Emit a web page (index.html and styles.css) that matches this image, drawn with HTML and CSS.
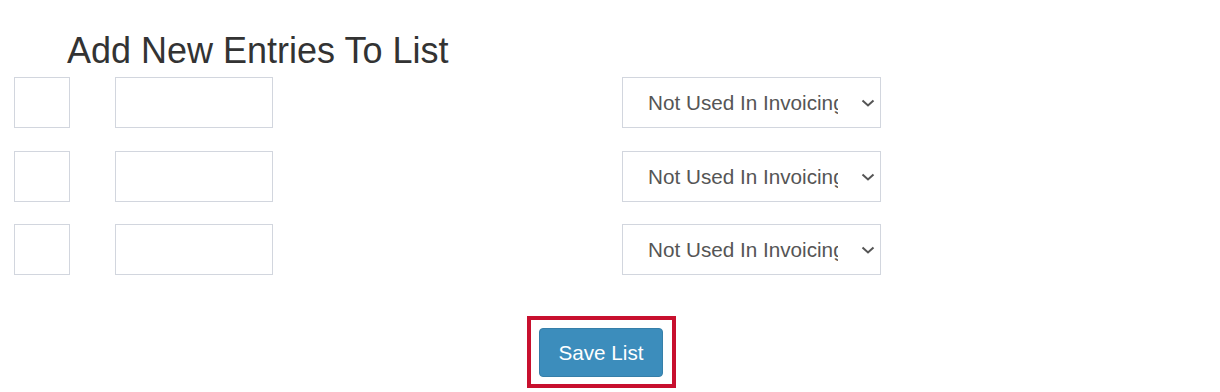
FILE: index.html
```html
<!DOCTYPE html>
<html lang="en">
<head>
<meta charset="utf-8">
<title>Add New Entries To List</title>
<link rel="stylesheet" href="styles.css">
</head>
<body>
<div class="page">
  <h2 class="title">Add New Entries To List</h2>
  <div class="rows">
    <div class="row">
      <input class="code" type="text">
      <input class="name" type="text">
      <div class="select-wrap">
        <select class="usage"><option>Not Used In Invoicing</option></select>
        <svg class="chev" width="14" height="8" viewBox="0 0 14 8"><path d="M1.5 1.5 L7 6.5 L12.5 1.5" fill="none" stroke="#555" stroke-width="2"/></svg>
      </div>
    </div>
    <div class="row">
      <input class="code" type="text">
      <input class="name" type="text">
      <div class="select-wrap">
        <select class="usage"><option>Not Used In Invoicing</option></select>
        <svg class="chev" width="14" height="8" viewBox="0 0 14 8"><path d="M1.5 1.5 L7 6.5 L12.5 1.5" fill="none" stroke="#555" stroke-width="2"/></svg>
      </div>
    </div>
    <div class="row">
      <input class="code" type="text">
      <input class="name" type="text">
      <div class="select-wrap">
        <select class="usage"><option>Not Used In Invoicing</option></select>
        <svg class="chev" width="14" height="8" viewBox="0 0 14 8"><path d="M1.5 1.5 L7 6.5 L12.5 1.5" fill="none" stroke="#555" stroke-width="2"/></svg>
      </div>
    </div>
  </div>
  <div class="actions">
    <div class="highlight">
      <button class="save" type="button">Save List</button>
    </div>
  </div>
</div>
</body>
</html>
```

FILE: styles.css
```css
html, body {
  margin: 0;
  padding: 0;
  background: #fff;
}
body {
  font-family: "Liberation Sans", Arial, sans-serif;
  color: #333;
  width: 1220px;
  height: 392px;
  overflow: hidden;
}
.page {
  padding: 31px 0 0 14px;
}
.title {
  margin: 0 0 7px 53px;
  font-size: 36px;
  font-weight: 400;
  line-height: 39px;
  color: #333;
}
.rows {
  display: flex;
  flex-direction: column;
  gap: 22.5px;
}
.row {
  display: flex;
  align-items: center;
  height: 51px;
}
input {
  box-sizing: border-box;
  height: 51px;
  border: 1px solid #d2d6de;
  border-radius: 0;
  margin: 0;
  padding: 6px 12px;
  font-family: inherit;
  font-size: 20.7px;
  background: #fff;
  outline: none;
}
.code {
  width: 56px;
}
.name {
  width: 158px;
  margin-left: 45px;
}
.select-wrap {
  position: relative;
  margin-left: 349px;
  width: 259px;
  height: 51px;
}
.usage {
  appearance: none;
  -webkit-appearance: none;
  box-sizing: border-box;
  width: 259px;
  height: 51px;
  margin: 0;
  border: 1px solid #d2d6de;
  border-radius: 0;
  background: #fff;
  padding: 0 42px 0 25px;
  font-family: "Liberation Sans", Arial, sans-serif;
  font-size: 20.7px;
  color: #555;
  outline: none;
}
.chev {
  position: absolute;
  left: 239px;
  top: 22px;
  pointer-events: none;
}
.actions {
  display: flex;
  margin-top: 41px;
  padding-left: 513px;
}
.highlight {
  border: 4px solid #c8102e;
  padding: 8px 9px 7px 8px;
}
.save {
  display: block;
  box-sizing: border-box;
  width: 124px;
  height: 49px;
  border: 1px solid #367fa9;
  border-radius: 4px;
  background: #3c8dbc;
  color: #fff;
  font-family: "Liberation Sans", Arial, sans-serif;
  font-size: 20.7px;
  padding: 0;
}
```
